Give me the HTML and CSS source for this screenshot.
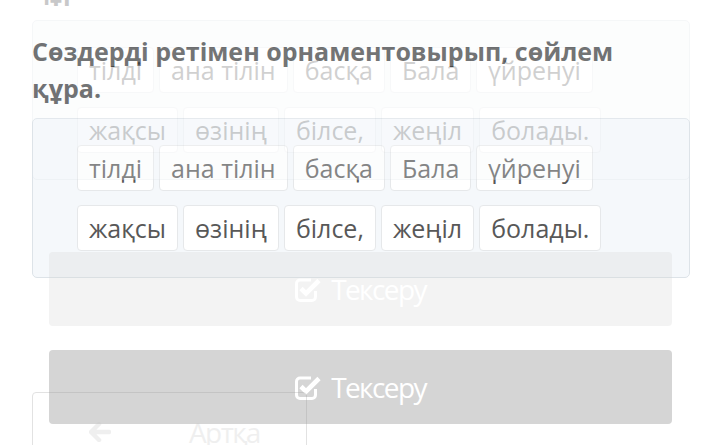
FILE: index.html
```html
<!DOCTYPE html>
<html lang="kk">
<head>
  <meta charset="UTF-8" />
  <meta name="viewport" content="width=device-width, initial-scale=1.0"/>
  <title>Сөйлем құра</title>
  <link rel="stylesheet" href="styles.css">
</head>
<body>

  <div class="stage">
    <div class="screen" id="mainScreen">
      <h2 class="task-title">Сөздерді ретімен орнаментовырып, сөйлем құра.</h2>

      <div class="word-panel">
        <div class="word-row">
          <span class="word">тілді</span>
          <span class="word">ана тілін</span>
          <span class="word">басқа</span>
          <span class="word">Бала</span>
          <span class="word">үйренуі</span>
        </div>
        <div class="word-row">
          <span class="word">жақсы</span>
          <span class="word">өзінің</span>
          <span class="word">білсе,</span>
          <span class="word">жеңіл</span>
          <span class="word">болады.</span>
        </div>
      </div>

      <button class="check-btn" type="button">
        <svg class="check-icon" viewBox="0 0 26 25" width="26" height="25">
          <path d="M16 3 H5 a3.5 3.5 0 0 0 -3.5 3.5 V20 a3.5 3.5 0 0 0 3.5 3.5 H17 a3.5 3.5 0 0 0 3.5 -3.5 V14" fill="none" stroke="#fff" stroke-width="3"/>
          <path d="M6 11.5 L11 16.5 L24 3.5" fill="none" stroke="#fff" stroke-width="4.6" stroke-linejoin="miter"/>
        </svg>
        <span>Тексеру</span>
      </button>

      <div class="nav-row">
        <button class="back-btn" type="button">
          <svg class="arrow-icon" viewBox="0 0 22 20" width="22" height="20">
            <path d="M10 2 L2 10 L10 18 M2.5 10 H20" fill="none" stroke="#c9c9c9" stroke-width="4.5" stroke-linecap="round" stroke-linejoin="round"/>
          </svg>
          <span>Артқа</span>
        </button>
      </div>
    </div>

    <!-- previous frame of the transition, fading out -->
    <div class="screen ghost" id="ghostScreen" aria-hidden="true"></div>
  </div>

  <script>
    const main = document.getElementById("mainScreen");
    const ghost = document.getElementById("ghostScreen");
    ghost.innerHTML = main.innerHTML;
  </script>

</body>
</html>
```

FILE: styles.css
```css
body {
  margin: 0;
  font-family: 'Open Sans', 'Noto Sans', sans-serif;
  background: #fff;
  overflow: hidden;
}

.stage {
  position: relative;
  height: 445px;
  overflow: hidden;
}

.screen {
  padding: 33px 19px 0 32px;
}

.ghost {
  position: absolute;
  top: -98px;
  left: 0;
  right: 0;
  opacity: 0.28;
}

.task-title {
  max-width: 620px;
  margin: 0 0 11px;
  font-size: 25px;
  line-height: 37px;
  font-weight: 700;
  color: #3d3e40;
}

.word-panel {
  background: #f5f8fb;
  border: 1px solid #dde3e8;
  border-radius: 5px;
  padding: 26px 44px;
  display: flex;
  flex-direction: column;
  gap: 14px;
}

.word-row {
  display: flex;
  gap: 5px;
}

.word {
  background: #fff;
  border: 1px solid #e6e8ea;
  border-radius: 4px;
  padding: 4px 11px;
  font-size: 25px;
  line-height: 36px;
  color: #585858;
}

.check-btn {
  display: flex;
  align-items: center;
  justify-content: center;
  gap: 10px;
  width: 623px;
  height: 74px;
  margin: 72px 0 0 17px;
  background: #d5d5d5;
  border: none;
  border-radius: 4px;
  color: #fff;
  font-family: inherit;
  font-size: 28px;
  letter-spacing: -1.6px;
  padding: 0;
}

.check-icon {
  flex-shrink: 0;
}

.nav-row {
  display: flex;
  margin-top: 66px;
}

.back-btn {
  display: flex;
  align-items: center;
  gap: 78px;
  width: 275px;
  height: 80px;
  padding: 0 0 0 56px;
  background: transparent;
  border: 1px solid #999;
  border-radius: 4px;
  color: #c9c9c9;
  font-family: inherit;
  font-size: 28px;
  letter-spacing: -1.6px;
}
```
